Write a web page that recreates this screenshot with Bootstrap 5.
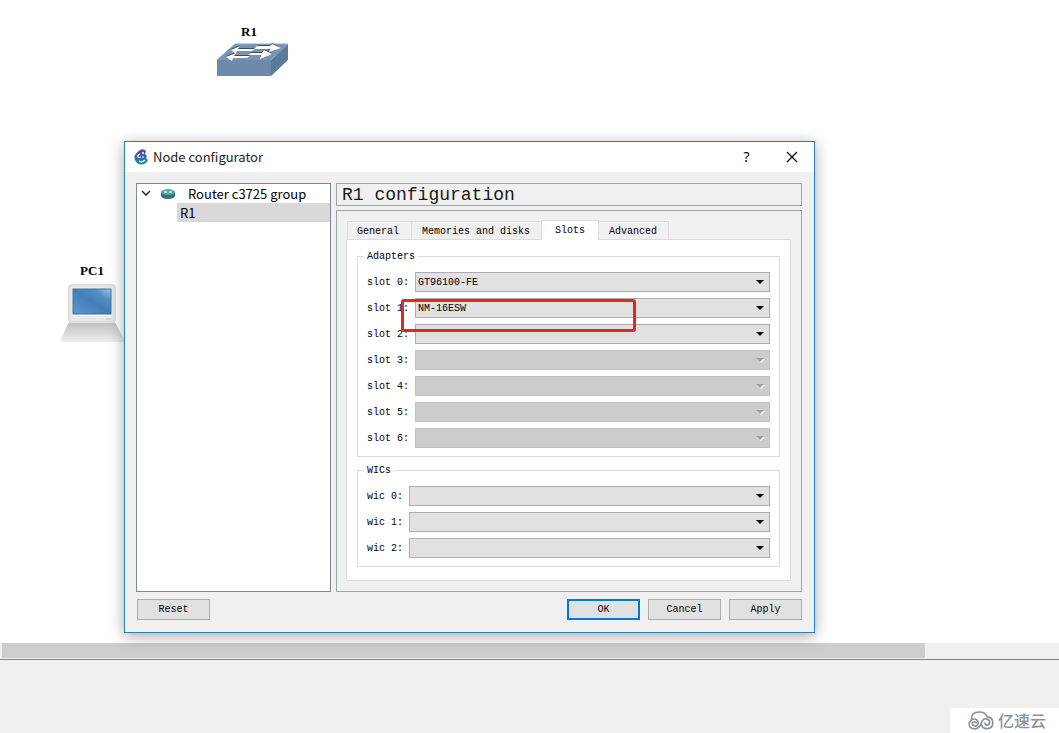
<!DOCTYPE html>
<html lang="en">
<head>
<meta charset="utf-8">
<meta name="viewport" content="width=device-width, initial-scale=1">
<title>Node configurator</title>
<link href="https://cdn.jsdelivr.net/npm/bootstrap@5.3.0/dist/css/bootstrap.min.css" rel="stylesheet">
<style>
:root { --face: #f0f0f0; --line: #dcdcdc; --frame: #a0a5a5; --accent: #0078d7; --ui: "Noto Sans CJK SC", "Noto Sans", sans-serif; }
body { font-family: "Liberation Mono", monospace; font-size: 10px; line-height: 14px; color: #000; background: #fff; }
svg { display: block; flex: none; }

/* topology canvas */
.scene { min-height: 643px; }
.device { position: absolute; font: bold 13px/16px "Liberation Serif", serif; }
.device-r1 { left: 216px; top: 24px; }
.device-pc1 { left: 60px; top: 263px; }
.scroll-track { height: 16px; background: var(--face); padding-left: 2px; }
.scroll-thumb { height: 15px; background: #cdcdcd; }
.console { background: var(--face); border-top: 1px solid #828282; }
.brand-mark { background: #fff; color: #8b919c; width: 109px; height: 25px; padding-left: 18px; font: 500 16px/25px "Noto Sans CJK SC", sans-serif; }

/* window */
.win { position: absolute; left: 124px; top: 141px; width: 691px; background: var(--face); border: 1px solid #2a7fc0; box-shadow: 0 3px 14px rgba(0,0,0,.35); }
.win-title { height: 30px; background: #fff; padding-left: 9px; font: 13px/30px var(--ui); color: #222; }
.win-btn { width: 45px; height: 30px; border: 0; background: none; padding: 0; color: #000; font: 14px/30px "Noto Sans", sans-serif; }
.win-body { padding: 11px 12px 12px 11px; }
.win-cols { gap: 5px; }
.tree { width: 195px; background: #fff; border: 1px solid #828790; font: 13px/19px var(--ui); }
.tree-row { height: 19px; padding-left: 4px; }
.tree-leaf { height: 19px; margin-left: 40px; padding-left: 3px; background: #d9d9d9; }
.stack { gap: 4px; }
.heading-box { height: 23px; margin: 0; border: 1px solid var(--frame); padding-left: 5px; font-size: 18px; line-height: 23px; font-weight: 400; color: #1a1a1a; }
.page-frame { border: 1px solid var(--frame); padding: 9px 10px 10px 9px; }

/* tabs */
.tabs { border: 0; padding-left: 1px; }
.tabs .nav-link { height: 18px; margin: 0; padding: 0 11px 0 10px; border: 1px solid var(--line); border-left-width: 0; border-bottom: 0; border-radius: 0; background: var(--face); color: #000; line-height: 19px; }
.tabs .nav-item:first-child .nav-link { border-left-width: 1px; padding-left: 9px; padding-right: 12px; }
.tabs .nav-link.active { position: relative; z-index: 1; height: 20px; padding: 0 13px; margin-bottom: -1px; background: #fff; color: #000; line-height: 20px; }
.sheet { background: #fff; border: 1px solid var(--line); padding: 9px 10px 13px; }

/* groups */
.group { border: 1px solid var(--line); padding: 9px 9px 8px 6px; }
.group + .group { margin-top: 6px; }
.group legend { float: none; width: auto; height: 14px; margin: 0; padding: 0 3px; font-size: 10px; line-height: 16px; }
.group-rows { gap: 6px; padding-left: 3px; }
.group-rows label { width: 48px; padding-top: 2px; }
.wics label { width: 42px; }
.combo { appearance: none; height: 20px; min-width: 0; padding: 1px 24px 0 2px; border: 1px solid #adadad; border-radius: 0; color: #000; font-size: 10px; line-height: 18px;
  background: #e1e1e1 url("data:image/svg+xml,%3Csvg xmlns='http://www.w3.org/2000/svg' width='8' height='4'%3E%3Cpath d='M0 0h8L4 4z'/%3E%3C/svg%3E") no-repeat right 5px center; }
.combo:disabled { opacity: 1; border-color: #bfbfbf; background: #cccccc url("data:image/svg+xml,%3Csvg xmlns='http://www.w3.org/2000/svg' width='9' height='5'%3E%3Cpath d='M1 1h8L5 5z' fill='%23fff'/%3E%3Cpath d='M0 0h8L4 4z' fill='%23a0a0a0'/%3E%3C/svg%3E") no-repeat right 4px center; }
.marker { left: 34px; top: 1px; width: 235px; height: 33px; border: 3px solid #e3281d; border-radius: 3px; pointer-events: none; z-index: 2; }

/* dialog buttons */
.actions { margin-top: 7px; gap: 8px; padding-left: 1px; }
.push { width: 73px; height: 21px; padding: 0; border: 1px solid #adadad; border-radius: 0; background: #e1e1e1; color: #000; font-size: 10px; line-height: 14px; }
.push-default { border: 2px solid var(--accent); }
</style>
</head>
<body>
<div class="d-flex flex-column min-vh-100">
  <main class="scene position-relative">
    <div class="device device-r1 d-flex flex-column align-items-center">
      <span class="pe-2">R1</span>
      <svg width="74" height="38" viewBox="0 0 74 38" aria-hidden="true">
        <path d="M1 20 19 4h53L55 20z" fill="#7894b1"/>
        <path d="M1 20h54v16H1z" fill="#6d8aa8"/>
        <path d="M55 20 72 4v16L55 36z" fill="#5a7b9b"/>
        <path d="M1 20 19 4h53" fill="none" stroke="#8fa8c0"/>
        <g id="lanes" fill="#3c5064"><path d="m15 9 9-4-2 3h17l-3 3H21l-1 3zM10 16l10-4-2 3h16l-3 3H17l-1 2zM42 5h12l2-2 8 4-12 4 1-3H39zM36 12h10l2-3 8 4-12 5 1-4H33z"/></g>
        <path d="m15 10 9-4-2 3h17l-3 2H21l-1 3zM10 17l10-4-2 3h16l-3 2H17l-1 3zM41 6h13l2-2 9 4-12 4 1-3H38zM35 13h11l2-3 8 4-12 5 1-4H32z" fill="#fff"/>
      </svg>
    </div>
    <div class="device device-pc1 d-flex flex-column align-items-center">
      <span>PC1</span>
      <svg width="64" height="66" viewBox="0 0 64 66" aria-hidden="true">
        <defs>
          <linearGradient id="screen" x1="0" y1="1" x2="1" y2="0"><stop offset="0" stop-color="#5b9bd0"/><stop offset=".5" stop-color="#427db8"/><stop offset=".75" stop-color="#5490c6"/><stop offset="1" stop-color="#a5c8e5"/></linearGradient>
          <linearGradient id="desk" x1="0" y1="0" x2="0" y2="1"><stop offset="0" stop-color="#bdbdbd"/><stop offset="1" stop-color="#ededed"/></linearGradient>
        </defs>
        <path d="M11 42h42q3 2 4 5l7 13q1 3-2 3H3q-3 0-2-3l6-13q1-3 4-5z" fill="url(#desk)"/>
        <rect x="8" y="5" width="48" height="39" rx="4" fill="#dedede"/>
        <rect x="10" y="7" width="44" height="35" rx="3" fill="#e8e8e8"/>
        <rect x="12" y="9" width="40" height="28" fill="#fafafa"/>
        <rect x="13" y="10" width="38" height="25" fill="url(#screen)" stroke="#3b6a96"/>
        <path d="M46 40h5" stroke="#c7c7c7"/>
      </svg>
    </div>

    <section class="win" role="dialog" aria-labelledby="winTitle">
      <header class="win-title d-flex align-items-center">
        <svg width="15" height="16" viewBox="0 0 15 16" aria-hidden="true">
          <defs><linearGradient id="app" x1="0" y1="0" x2="0" y2="1"><stop offset="0" stop-color="#713b9a"/><stop offset=".5" stop-color="#3468ad"/><stop offset="1" stop-color="#168fb0"/></linearGradient></defs>
          <path d="M6 1q4-2 6 1l-1 3 2 2-1 2 2 2-2 3q-5 3-9 0Q-1 10 1 6q2-3 5-5z" fill="url(#app)"/>
          <path d="M6 5Q3 6 4 8q1 1 3 0M5 12q3 2 6-1M8 8h2" fill="none" stroke="#fff" stroke-width="1.200"/>
          <circle cx="9" cy="4" r="1" fill="#fff"/>
        </svg>
        <span id="winTitle" class="flex-grow-1 ps-1">Node configurator</span>
        <button class="win-btn" type="button" aria-label="Help">?</button>
        <button class="win-btn d-flex align-items-center justify-content-center" type="button" aria-label="Close">
          <svg width="12" height="12" viewBox="0 0 12 12" aria-hidden="true"><path d="m1 1 10 10M11 1 1 11" stroke="#000" stroke-width="1.200"/></svg>
        </button>
      </header>

      <div class="win-body">
        <div class="win-cols d-flex">
          <nav class="tree flex-shrink-0" aria-label="Nodes">
            <div class="tree-row d-flex align-items-center">
              <svg width="11" height="8" viewBox="0 0 11 8" aria-hidden="true"><path d="m1 1 4 4 4-4" fill="none" stroke="#333" stroke-width="1.600"/></svg>
              <svg class="ms-2" width="16" height="12" viewBox="0 0 16 12" aria-hidden="true">
                <path d="M1 4v4q1 3 7 3t7-3V4z" fill="#2f7276"/><ellipse cx="8" cy="4" rx="7" ry="3" fill="#5da5a5"/>
                <path d="m4 3 3 1M12 3 9 4M4 5l3-1M12 5 9 4" stroke="#c4e0df"/>
              </svg>
              <span class="ps-2 ms-1">Router c3725 group</span>
            </div>
            <div class="tree-leaf">R1</div>
          </nav>

          <div class="stack d-flex flex-column flex-grow-1">
            <h1 class="heading-box">R1 configuration</h1>
            <div class="page-frame">
              <ul class="tabs nav nav-tabs align-items-end" role="tablist">
                <li class="nav-item" role="presentation"><button class="nav-link" type="button" role="tab">General</button></li>
                <li class="nav-item" role="presentation"><button class="nav-link" type="button" role="tab">Memories and disks</button></li>
                <li class="nav-item" role="presentation"><button class="nav-link active" type="button" role="tab" aria-selected="true">Slots</button></li>
                <li class="nav-item" role="presentation"><button class="nav-link" type="button" role="tab">Advanced</button></li>
              </ul>
              <form class="sheet">
                <fieldset class="group">
                  <legend>Adapters</legend>
                  <div class="group-rows d-flex flex-column">
                    <div class="d-flex align-items-center"><label for="slot0">slot 0:</label><select id="slot0" class="combo flex-grow-1"><option>GT96100-FE</option></select></div>
                    <div class="d-flex align-items-center position-relative"><label for="slot1">slot 1:</label><select id="slot1" class="combo flex-grow-1"><option>NM-16ESW</option></select><span class="marker position-absolute"></span></div>
                    <div class="d-flex align-items-center"><label for="slot2">slot 2:</label><select id="slot2" class="combo flex-grow-1"><option></option></select></div>
                    <div class="d-flex align-items-center"><label for="slot3">slot 3:</label><select id="slot3" class="combo flex-grow-1" disabled><option></option></select></div>
                    <div class="d-flex align-items-center"><label for="slot4">slot 4:</label><select id="slot4" class="combo flex-grow-1" disabled><option></option></select></div>
                    <div class="d-flex align-items-center"><label for="slot5">slot 5:</label><select id="slot5" class="combo flex-grow-1" disabled><option></option></select></div>
                    <div class="d-flex align-items-center"><label for="slot6">slot 6:</label><select id="slot6" class="combo flex-grow-1" disabled><option></option></select></div>
                  </div>
                </fieldset>
                <fieldset class="group wics">
                  <legend>WICs</legend>
                  <div class="group-rows d-flex flex-column">
                    <div class="d-flex align-items-center"><label for="wic0">wic 0:</label><select id="wic0" class="combo flex-grow-1"><option></option></select></div>
                    <div class="d-flex align-items-center"><label for="wic1">wic 1:</label><select id="wic1" class="combo flex-grow-1"><option></option></select></div>
                    <div class="d-flex align-items-center"><label for="wic2">wic 2:</label><select id="wic2" class="combo flex-grow-1"><option></option></select></div>
                  </div>
                </fieldset>
              </form>
            </div>
          </div>
        </div>

        <footer class="actions d-flex">
          <button class="push btn me-auto" type="button">Reset</button>
          <button class="push push-default btn" type="button">OK</button>
          <button class="push btn" type="button">Cancel</button>
          <button class="push btn" type="button">Apply</button>
        </footer>
      </div>
    </section>
  </main>

  <div class="scroll-track"><div class="scroll-thumb" style="width:87.3%"></div></div>
  <div class="console flex-grow-1 d-flex align-items-end justify-content-end">
    <div class="brand-mark d-flex align-items-center" lang="zh">
      <svg class="me-1" width="26" height="19" viewBox="0 0 78 58" fill="none" stroke="#8b919c" stroke-width="5" stroke-linecap="round" aria-hidden="true">
        <path d="M24 36q-4-5-9-2-5 5 0 10 7 5 13-1 6-9-2-16-8-5-16 0Q8 3 34 3q18 0 24 15 17 1 17 18 0 18-18 18-14 0-18-16"/>
        <path d="M10 27Q-2 38 6 49q9 9 23 3 10-5 12-17 4-13 15-11 10 3 9 12-2 8-9 7-5-1-5-6"/>
      </svg>
      <span>亿速云</span>
    </div>
  </div>
</div>
<script src="https://cdn.jsdelivr.net/npm/bootstrap@5.3.0/dist/js/bootstrap.bundle.min.js"></script>
</body>
</html>
